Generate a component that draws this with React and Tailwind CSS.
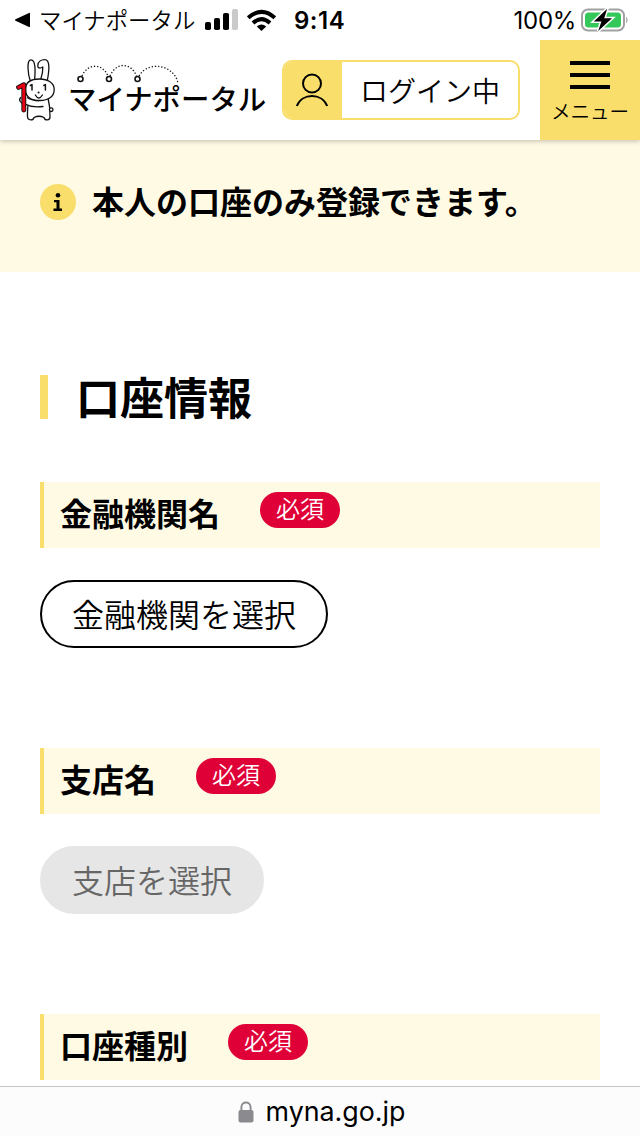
const fields = [
  { id: 'bank', label: '金融機関名', action: '金融機関を選択', enabled: true },
  { id: 'branch', label: '支店名', action: '支店を選択', enabled: false },
  { id: 'type', label: '口座種別' },
];

function StatusBar() {
  return (
    <div className="relative z-20 flex h-10 shrink-0 items-center bg-white pl-[14px] pr-[11px]">
      <svg className="h-4 w-[17px]" viewBox="0 0 17 16">
        <path d="M1.5 7.3 L15 .9 Q16 .5 16 1.6 V14.2 Q16 15.4 15 14.9 L1.5 8.7 Q.3 8 1.5 7.3Z" />
      </svg>
      <span className="ml-2 w-[157px] whitespace-nowrap pb-[2px] text-[22.4px] font-[350] leading-[38px]">マイナポータル</span>
      {/* Sinal */}
      <svg className="ml-[9px] h-[22px] w-[33px]" viewBox="0 0 33 22">
        <rect x="0" y="13" width="6" height="8" rx="1.8" />
        <rect x="9" y="9" width="6" height="12" rx="1.8" />
        <rect x="18" y="4" width="6" height="17" rx="1.8" />
        <rect x="27" y="0" width="6" height="21" rx="1.8" fill="#cacaca" />
      </svg>
      <svg className="ml-2 h-[23px] w-[31px]" viewBox="0 0 31 23" fill="none" stroke="#000" strokeWidth="4">
        <path d="M2.2 8.8 Q15.5 -3 28.8 8.8" />
        <path d="M7 14 Q15.5 6.2 24 14" />
        <path d="M15.5 22 L10.8 17.4 Q15.5 13.4 20.2 17.4Z" fill="#000" stroke="none" />
      </svg>
      <span className="ml-[17px] pt-[2px] font-['Inter'] text-[24px] font-semibold leading-10 tracking-[0.5px]">9:14</span>
      <span className="ml-auto pt-[2px] font-['Inter'] text-[24px] leading-10 tracking-[-0.3px]">100%</span>
      <svg className="ml-[5px] h-6 w-12" viewBox="0 0 48 24">
        <rect x="1" y="1.5" width="42" height="21" rx="6" fill="none" stroke="#a1a1a1" strokeWidth="2" />
        <rect x="4" y="4.5" width="36" height="15" rx="3.5" fill="#34c759" />
        <path d="M45.2 8.2 Q48 12 45.2 15.8Z" fill="#a1a1a1" />
        <path d="M26.2 .8 L12.8 13.4 H20.4 L17.2 23 L31 10.2 H23.2Z" stroke="#fff" strokeWidth="3" />
        <path d="M26.2 .8 L12.8 13.4 H20.4 L17.2 23 L31 10.2 H23.2Z" />
      </svg>
    </div>
  );
}

function Rabbit() {
  return (
    <svg
      className="h-[68px] w-11 shrink-0"
      viewBox="14 56 44 68"
      fill="#fff"
      stroke="#111"
      strokeWidth="1.3"
      strokeLinecap="round"
      strokeLinejoin="round"
    >
      <path d="M30 80 C28.5 76 26 60 30.8 59.8 C36 59.5 35.2 72 34.7 79" />
      <path d="M40.8 79 C42 76 42.9 71 42.8 67 C40 68.8 37.6 68.2 37.8 65.5 C38 61.5 41.5 59.7 44.8 59.7 C50.2 59.7 49.3 70 47.4 80" />
      <path d="M28.5 99 C28 105 27.2 112 27.5 117 C28 120.5 33 121 34 117.5 Q39 115 44 117.5 C45 121 50 120.5 50 117 C50.2 111 49.5 104 48 98" />
      <circle cx="51.2" cy="109.7" r="1.8" />
      <path d="M25.5 89.5 C25.5 82 31 79 39.5 79 C48 79 54.2 83 54.2 89.5 C54.2 97 48 100.5 40 100.5 C31 100.5 25.5 97 25.5 89.5Z" />
      <path d="M20.8 97.5 C18.2 99.5 20.5 104 25 104.2 C30 106.8 37 107.3 43 106.5 L40 101.2 Q32 101 27.5 97.8Z" stroke="none" />
      <path d="M20.8 97.5 C18.2 99.5 20.5 104 25 104.2 C30 106.8 37 107.3 43 106.5 M27.5 97.8 Q32 100.8 39 100.8" fill="none" />
      <path d="M18.6 87.4 L23.8 84.8 V110" fill="none" strokeWidth="4.9" />
      <path d="M18.6 87.4 L23.8 84.8 V110" fill="none" stroke="#e60012" strokeWidth="3" />
      <path d="M30.3 85.5 L32 84.6 V90 M43.8 85.5 L45.4 84.6 V90" fill="none" strokeWidth="1.5" />
      <circle cx="38.6" cy="92.5" r="1" fill="#111" stroke="none" />
      <path d="M35.3 95 Q38.8 101 42.4 95" fill="none" />
    </svg>
  );
}

function Header() {
  return (
    <header className="relative z-10 flex h-[100px] shrink-0 bg-white shadow-[0_1px_5px_rgba(0,0,0,0.25)]">
      <div className="flex w-[282px] shrink-0 pl-[14px] pt-4">
        <Rabbit />
        <div className="ml-[10px] flex flex-col pt-2">
          <svg className="ml-1 h-[18px] w-32" viewBox="72 64 128 18" overflow="visible" fill="none" stroke="#111">
            <path
              d="M82 76 C87 64 102 62 108 76 M110 76 C116 62 131 62 136.5 76 M139 76 C145 66 155 66 159 66.5 C169 67.5 177 75 178 84"
              strokeWidth="1.3"
              strokeDasharray="1.3 1.9"
            />
            <g strokeWidth="1.6" fill="#fff">
              <circle cx="80.5" cy="79" r="2.5" />
              <circle cx="109" cy="79" r="2.5" />
              <circle cx="137.5" cy="79" r="2.5" />
            </g>
          </svg>
          <span className="-mt-[2px] whitespace-nowrap text-[28.4px] font-medium leading-9">マイナポータル</span>
        </div>
      </div>
      <div className="mt-5 flex h-[60px] w-[238px] shrink-0 overflow-hidden rounded-[10px] border-2 border-[#f9de6b]">
        <div className="flex w-[58px] shrink-0 items-center justify-center bg-[#f9de6b]">
          <svg className="mr-[2px] h-9 w-9" viewBox="0 0 36 36" fill="none" stroke="#000" strokeWidth="2">
            <circle cx="18" cy="11.5" r="9" />
            <path d="M2.8 34 C8 20.7 28 20.7 33.2 34" />
          </svg>
        </div>
        <span className="whitespace-nowrap pl-[18px] text-[28px] font-[350] leading-[56px]">ログイン中</span>
      </div>
      <button className="ml-auto flex w-[100px] flex-col items-center bg-[#f9de6b] pt-[21px]">
        <span className="flex w-10 flex-col gap-2">
          <span className="h-1 bg-black" />
          <span className="h-1 bg-black" />
          <span className="h-1 bg-black" />
        </span>
        <span className="mt-2 whitespace-nowrap text-[19.5px] font-[350] leading-7">メニュー</span>
      </button>
    </header>
  );
}

function Field({ field }) {
  return (
    <div className="h-[266px] shrink-0">
      <div className="flex h-[66px] items-start border-l-4 border-[#f9de6b] bg-[#fffae4] pl-4">
        <h3 className="text-[32px] font-bold leading-[61px]">{field.label}</h3>
        <span className="ml-10 mt-[10px] h-9 w-20 rounded-full bg-[#e00038] text-center text-2xl font-[350] leading-[32px] text-white">
          必須
        </span>
      </div>
      {field.action && (
        <button
          disabled={!field.enabled}
          className={`mt-8 h-[68px] rounded-full border-2 px-[30px] pb-[2px] text-[32px] font-[350] leading-[62px] ${
            field.enabled ? 'border-black bg-white text-black' : 'border-[#e6e6e6] bg-[#e6e6e6] text-[#666666]'
          }`}
        >
          {field.action}
        </button>
      )}
    </div>
  );
}

export default function App() {
  return (
    <div lang="ja" className="flex h-[1136px] w-[640px] flex-col overflow-hidden bg-white font-['Noto_Sans_CJK_JP',sans-serif] text-black">
      <StatusBar />
      <Header />
      <div className="flex h-[132px] shrink-0 items-start bg-[#fffae4] pl-10 pt-[38px]">
        <span className="mt-[6px] flex h-9 w-9 items-center justify-center rounded-full bg-[#f9de6b]">
          <svg className="h-[18px] w-[10px]" viewBox="0 0 10 18">
            <circle cx="5" cy="2.3" r="2.3" />
            <path d="M1 7 H6.5 V15.5 H9 V18 H.5 V15.5 H3.5 V9.2 H1Z" />
          </svg>
        </span>
        <p className="ml-4 text-[32px] font-bold leading-[45px]">本人の口座のみ登録できます。</p>
      </div>

      {/* 口座情報フォーム */}
      <main className="flex min-h-0 flex-1 flex-col overflow-hidden px-10 pt-[103px]">
        <h2 className="mb-[63px] flex h-11 shrink-0 items-center border-l-8 border-[#f9de6b] pb-[3px] pl-7 text-[44px] font-bold leading-[44px]">
          口座情報
        </h2>
        {fields.map((field) => (
          <Field key={field.id} field={field} />
        ))}
      </main>

      <footer className="flex h-[50px] shrink-0 items-center justify-center border-t border-[#c4c4c6] bg-[#fdfcfd] pl-[3px]">
        <svg className="h-[22px] w-4" viewBox="0 0 16 22">
          <path d="M3.4 10 V6.3 C3.4 -.2 12.6 -.2 12.6 6.3 V10" fill="none" stroke="#8a8a8f" strokeWidth="1.9" />
          <rect x=".5" y="9" width="15" height="12.5" rx="2" fill="#8a8a8f" />
        </svg>
        <span className="ml-3 font-['Inter'] text-[26.8px] leading-[49px]">myna.go.jp</span>
      </footer>
    </div>
  );
}
